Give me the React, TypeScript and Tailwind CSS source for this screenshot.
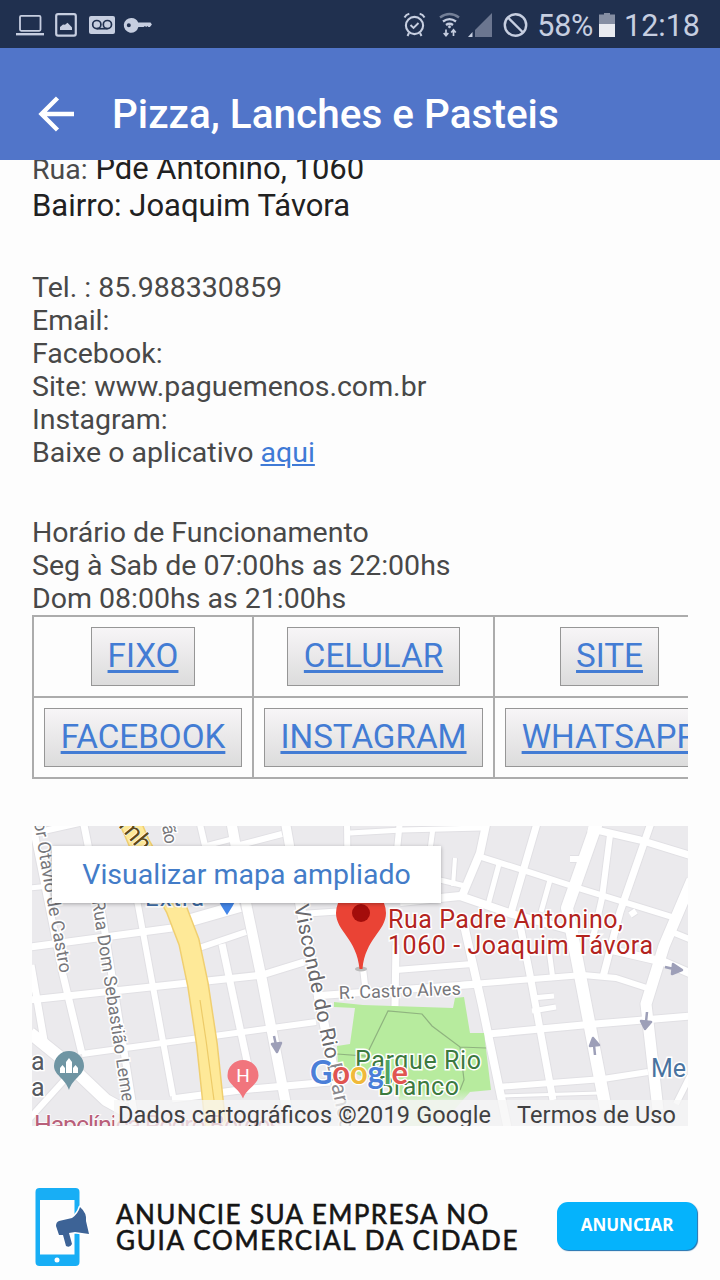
const contactLines = [
  "Tel. : 85.988330859",
  "Email:",
  "Facebook:",
  "Site: www.paguemenos.com.br",
  "Instagram:",
];

const hours = [
  "Horário de Funcionamento",
  "Seg à Sab de 07:00hs as 22:00hs",
  "Dom 08:00hs as 21:00hs",
];

const links = ["FIXO", "CELULAR", "SITE", "FACEBOOK", "INSTAGRAM", "WHATSAPP"];

// [path, width] in map units
const streets: [string, number][] = [
  ["M30 812L63 975L82 1054", 7],
  ["M31 965L45 1046", 7],
  ["M83 820L103 920L136 1126", 7],
  ["M124 850L138 905L173 1096", 6],
  ["M199 820L206 850", 6],
  ["M222 944L250 1075", 7],
  ["M231 820L247 908L262 980L288 1115", 10],
  ["M285 820L300 905L345 1126", 9],
  ["M30 834L84 822", 6],
  ["M30 888L60 885", 5],
  ["M30 947L172 928", 7],
  ["M199 948L246 932", 6],
  ["M184 922L240 906", 12],
  ["M30 1000L262 975L304 962", 7],
  ["M82 1054L316 1022", 6],
  ["M172 1099L240 1090L330 1082", 7],
  ["M30 1033L66 1062L106 1100L124 1110", 12],
  ["M30 1118L68 1076", 6],
  ["M236 846L282 834", 6],
  ["M205 846L236 838", 5],
  ["M347 820L348 905", 6],
  ["M400 820L397 850", 6],
  ["M350 833L402 830L482 828", 5],
  ["M433 828L430 850", 5],
  ["M300 914L345 911", 6],
  ["M314 996L396 990L480 984", 7],
  ["M363 968L366 994", 6],
  ["M396 945L395 1006", 7],
  ["M396 970L472 964", 6],
  ["M487 820L480 853L462 896", 8],
  ["M478 856L532 873L575 887L672 917", 6],
  ["M440 880L465 886", 5],
  ["M455 858L453 886", 4],
  ["M538 820L510 916", 7],
  ["M499 864L488 905", 5],
  ["M550 880L541 912", 5],
  ["M570 859L582 859", 6],
  ["M598 820L567 908L580 975L606 1110", 12],
  ["M588 828L640 840L692 856", 7],
  ["M652 820L620 912L603 977", 7],
  ["M610 835L602 898L592 942", 6],
  ["M630 915L636 911", 6],
  ["M692 880L664 946L646 1004L658 1110", 11],
  ["M400 902L460 896L512 914L578 932", 8],
  ["M460 985L583 975L616 978L650 989", 6],
  ["M488 1034L583 1025L692 1016", 7],
  ["M498 1087L603 1079L648 1072", 6],
  ["M500 1096L600 1093", 3],
  ["M464 925L482 1005L508 1130", 8],
  ["M519 920L530 975L553 1100", 7],
  ["M549 950L553 980", 5],
  ["M532 998L554 996", 5],
  ["M532 1011L556 1007", 5],
  ["M612 950L664 962L692 974", 8],
  ["M672 932L692 940", 6],
  ["M690 1076L676 1104", 6],
];

const StatusBar = () => {
  return (
    <div className="flex h-12 items-center justify-between bg-[#20304f] text-[#c6cee0]">
      <svg width="170" height="48" viewBox="0 0 170 48" fill="none">
        <rect x="20" y="15.8" width="20.5" height="15" rx="1.2" stroke="currentColor" strokeWidth="1.8" />
        <path d="M16 33h28v2.4H16z" fill="currentColor" />
        <rect x="56.2" y="14.2" width="19.6" height="21.4" rx="1.8" stroke="currentColor" strokeWidth="2.2" />
        <path d="M60 30v-3l3-2.6 2 .4 2.5-2 3.2 3.2 1.3 1.4V30z" fill="currentColor" />
        <rect x="89" y="16" width="26" height="18" rx="2" fill="currentColor" />
        <g stroke="#20304f" strokeWidth="1.7">
          <circle cx="96.8" cy="24.6" r="4.1" />
          <circle cx="107.4" cy="24.6" r="4.1" />
          <path d="M96.8 28.7h10.6" />
        </g>
        <path
          fillRule="evenodd"
          fill="currentColor"
          d="M131.5 18a7.4 7.4 0 0 1 6.7 4.6h12.3l1.4 1.8-2 2.6h-1.5l-1-1-1.2 1.1-1.3-1.1-1.2 1.1h-5.3A7.4 7.4 0 1 1 131.5 18zm-2.7 5.3a2 2 0 1 0 0 4 2 2 0 0 0 0-4z"
        />
      </svg>
      <div className="flex items-center pr-[20px]">
        <svg width="138" height="48" viewBox="396 0 138 48" fill="none" stroke="currentColor">
          <circle cx="414.5" cy="25.5" r="8.6" strokeWidth="2.1" />
          <path d="M410.5 25l3 3 5-5" strokeWidth="1.9" />
          <path d="M404.5 17.5q1.5-3 4.8-3.7M424.5 17.5q-1.5-3-4.8-3.7M409 33l-1.5 3M420 33l1.5 3" strokeWidth="2" />
          <path d="M440 17.5q9.5-7 19 0" strokeWidth="2.4" opacity=".5" />
          <path d="M443 21.5q6.5-4.8 13 0M446 25q3.5-2.5 7 0" strokeWidth="2.3" />
          <circle cx="449.5" cy="26.8" r="1.2" fill="currentColor" strokeWidth=".5" />
          <path d="M446 29.5v6M443.7 33l2.3 2.6 2.3-2.6M453.5 36v-6M451.2 32.5l2.3-2.6 2.3 2.6" strokeWidth="1.7" />
          <path d="M492 13v24h-17V30z" fill="#6b7690" stroke="none" />
          <path d="M472.5 32v5H468z" fill="currentColor" stroke="none" />
          <circle cx="515.5" cy="25" r="10.7" strokeWidth="2.4" />
          <path d="M508 17.5l15 15" strokeWidth="2.4" />
        </svg>
        <span className="ml-[3px] pt-[3px] text-[30.5px] leading-[48px] tracking-[-0.3px] whitespace-nowrap">58%</span>
        <svg className="ml-[6px]" width="16" height="48" viewBox="0 0 16 48">
          <path d="M0 14.5h5V13h6v1.5h5V24H0z" fill="#858ea3" />
          <path d="M0 24h16v13H0z" fill="#e8eaf0" />
        </svg>
        <span className="ml-[9px] pt-[3px] text-[30.5px] leading-[48px] whitespace-nowrap">12:18</span>
      </div>
    </div>
  );
};

const AppBar = () => {
  return (
    <div className="flex h-28 items-center bg-[#5175c9] pt-5 text-white">
      <svg className="ml-[38px]" width="36" height="36" viewBox="0 0 36 36" fill="none" stroke="currentColor" strokeWidth="4.4">
        <path d="M36 18H4M19.5 2L3.5 18l16 16" />
      </svg>
      <h1 className="ml-[38px] text-[40.5px] font-medium leading-none whitespace-nowrap">Pizza, Lanches e Pasteis</h1>
    </div>
  );
};

const StreetMap = () => {
  return (
    <svg className="block" width="656" height="300" viewBox="32 826 656 300" fontFamily="Roboto, sans-serif">
      <defs>
        <path id="castro" d="M34 822L45 890L62 984" />
        <path id="leme" d="M92 901L123 1106" />
        <path id="visconde" d="M294 906L318 1022L345 1150" />
        <path id="avenue" d="M118 826L148 862" />
        <linearGradient id="parkFade" x1="0" y1="998" x2="0" y2="1126" gradientUnits="userSpaceOnUse">
          <stop offset=".72" stopColor="#b7eb9e" />
          <stop offset=".8" stopColor="#d9eed0" />
        </linearGradient>
      </defs>
      <rect x="32" y="826" width="656" height="300" fill="#ebeaed" />
      <g fill="none" strokeLinejoin="round">
        {streets.map(([d, width]) => (
          <path key={d} d={d} stroke="#e1e0e4" strokeWidth={width + 2} />
        ))}
        {streets.map(([d, width]) => (
          <path key={d} d={d} stroke="#fff" strokeWidth={width} />
        ))}
      </g>

      {/* Park */}
      <path
        d="M334 1002L363 1005L453 1008L455 998L464 997L470 1033L484 1033L491 1090L470 1092L440 1126H402L398 1092L338 1066L337 1046L350 1044L355 1008L334 1007z"
        fill="url(#parkFade)"
      />
      <path
        d="M337 1054L366 1056L388 1011L422 1014L432 1026L460 1047L486 1048M460 1047L464 1080L460 1090"
        fill="none"
        stroke="#8fb37f"
        strokeWidth="1.2"
      />

      {/* Avenue */}
      <g fill="none" strokeLinejoin="round">
        <path d="M127 815L140 845L163 885L176 908L189 942L198 985L207 1045L216 1130" stroke="#f0cf70" strokeWidth="22" />
        <path d="M127 815L140 845L163 885L176 908L189 942L198 985L207 1045L216 1130" stroke="#fee998" strokeWidth="19" />
        <path d="M200 1000L206 1040L214 1100" stroke="#edcb68" strokeWidth="1.2" />
      </g>

      {/* Traffic arrows */}
      <g fill="#9d9fb8" stroke="#9d9fb8" strokeWidth="2.5" strokeLinejoin="round">
        <path d="M274 1036l2 9M272 1044l5 8 4-9z" />
        <path d="M665 967l9 2M673 964l9 6-10 4z" />
        <path d="M647 1012l-1 10M641 1021l4 8 6-7z" />
        <path d="M595 1055l-1-10M590 1046l3-8 6 7z" />
      </g>

      <g fill="#77777b" stroke="#fff" strokeWidth="3" paintOrder="stroke" fontSize="18">
        <text textLength="154" lengthAdjust="spacingAndGlyphs"><textPath href="#castro">or Otávio de Castro</textPath></text>
        <text textLength="204" lengthAdjust="spacingAndGlyphs"><textPath href="#leme">Rua Dom Sebastião Leme</textPath></text>
        <text fontSize="21" fill="#68686c">
          <textPath href="#visconde" textLength="157">Visconde do Rio</textPath>
        </text>
        <text fontSize="21" fill="#8a8a8e">
          <textPath href="#visconde" startOffset="162" textLength="68">Branco</textPath>
        </text>
        <text fontSize="25" fill="#5f4a17" strokeWidth="1"><textPath href="#avenue">mh</textPath></text>
        <text transform="translate(162 826) rotate(80)" textLength="19">ão</text>
        <text transform="translate(339 999) rotate(-2)" fontSize="18" textLength="122">R. Castro Alves</text>
      </g>

      {/* Places */}
      <g stroke="#fff" strokeWidth="3" paintOrder="stroke" fontSize="25">
        <text x="145" y="906" fill="#3f6da6" fontSize="24" textLength="59">Extra</text>
        <text x="651" y="1077" fill="#4a739f">Me</text>
        <text x="31" y="1070" fill="#555961">a</text>
        <text x="31" y="1096" fill="#555961">a</text>
        <text x="34" y="1134" fill="#b9607a" strokeWidth="1.5" textLength="248">Hapclínica Pedro Borges</text>
        <text x="355" y="1069" fill="#3c7a3f" textLength="126">Parque Rio</text>
        <text x="378" y="1095" fill="#3c7a3f" textLength="81">Branco</text>
        <text x="388" y="928" fill="#b3241e" textLength="235">Rua Padre Antonino,</text>
        <text x="388" y="954" fill="#b3241e" textLength="265">1060 - Joaquim Távora</text>
      </g>

      <path d="M216 896h22q-5 10-11 19-6-9-11-19z" fill="#4285e8" />
      <path d="M69 1051a15 15 0 0 1 15 15c0 9-11 12-15 24-4-12-15-15-15-24a15 15 0 0 1 15-15z" fill="#6f95a3" />
      <path d="M60 1073v-5l2.5-3 2.5 3v5zM66 1073v-11l3-4 3 4v11zM73 1073v-5l2.5-3 2.5 3v5z" fill="#fff" />
      <path d="M243 1060a15.5 15.5 0 0 1 15.5 15.5c0 9-12 13-15.5 23-3.5-10-15.5-14-15.5-23A15.5 15.5 0 0 1 243 1060z" fill="#f1757d" />
      <text x="243" y="1082" fill="#fff" fontSize="19" textAnchor="middle">H</text>

      <ellipse cx="361" cy="969" rx="6" ry="2.5" fill="#bbb" />
      <path d="M361 888a25 25 0 0 1 25 25c0 18-21 26-23.5 56h-3C357 939 336 931 336 913a25 25 0 0 1 25-25z" fill="#ea4335" />
      <circle cx="361" cy="913" r="9" fill="#a30d0b" />

      <text x="310" y="1084" fontSize="33" fontWeight="700" stroke="#fff" strokeWidth="2.5" paintOrder="stroke" textLength="98" lengthAdjust="spacingAndGlyphs" fontFamily="Lato, sans-serif">
        <tspan fill="#4b7fd8">G</tspan>
        <tspan fill="#e05550">o</tspan>
        <tspan fill="#f0b93a">o</tspan>
        <tspan fill="#4b7fd8">g</tspan>
        <tspan fill="#4fa463">l</tspan>
        <tspan fill="#e05550">e</tspan>
      </text>

      <rect x="114" y="1100" width="574" height="26" fill="#f5f5f5" fillOpacity=".75" />
      <g fill="#404042" fontSize="23.5">
        <text x="118" y="1123" textLength="373">Dados cartográficos ©2019 Google</text>
        <text x="517" y="1123" textLength="159">Termos de Uso</text>
      </g>
    </svg>
  );
};

const AdBanner = () => {
  return (
    <div className="mt-[62px] flex h-[78px] items-start pl-[3px]">
      <svg className="shrink-0" width="56" height="78" viewBox="0 0 56 78">
        <path
          fillRule="evenodd"
          fill="#18aef5"
          d="M4.5 0h36q4 0 4 4v70q0 4-4 4h-36q-4 0-4-4V4q0-4 4-4zM5 12v54.5h34.5V12z"
        />
        <circle cx="22" cy="72" r="2.5" fill="#fff" />
        <path
          d="M45 19Q52 25 51 33L54 46L40 44L34 45L37 56Q35 60 31 58L28 47L24 47L21 38Q21 34 24 33L37 30Q43 26 45 19z"
          fill="#3d6396"
          stroke="#fff"
          strokeWidth="3"
          paintOrder="stroke"
          strokeLinejoin="round"
        />
      </svg>
      <div className="ml-[25px] mt-[13px] w-[404px] shrink-0 font-[Lato] text-[26px] leading-[26px] text-[#151515] whitespace-nowrap">
        <p className="tracking-[1.4px] [-webkit-text-stroke:0.6px_#151515]">ANUNCIE SUA EMPRESA NO</p>
        <p className="tracking-[1.7px] [-webkit-text-stroke:0.6px_#151515]">GUIA COMERCIAL DA CIDADE</p>
      </div>
      <button className="ml-[37px] mt-[14px] h-12 w-[140px] shrink-0 rounded-[11px] bg-[#05b3fc] pb-0.5 font-['Noto_Sans'] text-[17px] font-bold text-white shadow-[1px_1px_1px_#1b6fae]">
        ANUNCIAR
      </button>
    </div>
  );
};

const App = () => {
  return (
    <div className="h-[1280px] w-[720px] overflow-hidden bg-[#fdfdfd] font-[Roboto,sans-serif]">
      <StatusBar />
      <AppBar />
      <div className="h-[1120px] overflow-hidden px-8">
        <div className="-mt-[10px] text-[31px] leading-[37px] text-[#212121]">
          <p className="h-[37px]">
            <span className="text-[28.5px] text-[#4a4a4a]">Rua:</span> Pde Antonino, 1060
          </p>
          <p>Bairro: Joaquim Távora</p>
        </div>

        <div className="mt-[47px] text-[28.5px] leading-[33px] text-[#484848]">
          {contactLines.map((line) => (
            <p key={line}>{line}</p>
          ))}
          <p>
            Baixe o aplicativo{" "}
            <a className="text-[#3f7ad6] underline decoration-2 underline-offset-2">aqui</a>
          </p>
        </div>

        <div className="mt-[47px] text-[28.5px] leading-[33px] text-[#484848]">
          {hours.map((line) => (
            <p key={line}>{line}</p>
          ))}
        </div>

        {/* Link table, cut off at the right edge */}
        <div className="overflow-hidden">
          <div className="grid w-[694px] grid-cols-[220px_241px_231px] border-t-2 border-l-2 border-[#acacac]">
            {links.map((link) => (
              <div key={link} className="flex h-[81px] items-center justify-center border-r-2 border-b-2 border-[#acacac]">
                <a className="flex h-[59px] items-center border border-[#969696] bg-linear-to-b from-[#f7f5f7] to-[#dcdcdc] px-[15.5px] pb-0.5 text-[33.2px] leading-none text-[#437cd4] underline decoration-[2.5px] underline-offset-[3px]">
                  {link}
                </a>
              </div>
            ))}
          </div>
        </div>

        <div className="relative mt-[47px] h-[300px] overflow-hidden">
          <StreetMap />
          <a className="absolute left-5 top-5 flex h-[57px] w-[389px] items-center justify-center bg-white pt-0.5 text-[28.5px] text-[#437cc8] shadow-[0_1px_4px_rgba(0,0,0,0.3)] whitespace-nowrap">
            Visualizar mapa ampliado
          </a>
        </div>

        <AdBanner />
      </div>
    </div>
  );
};

export default App;
